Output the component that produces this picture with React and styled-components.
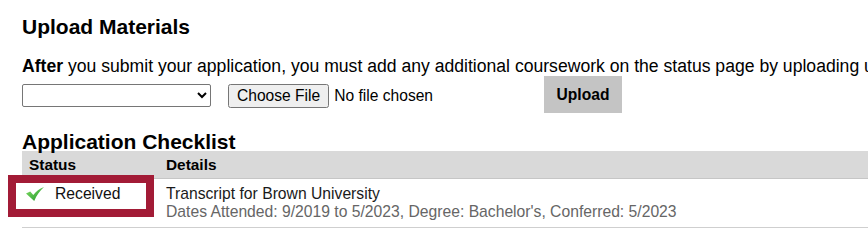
import styled, { createGlobalStyle } from "styled-components";

const GlobalStyle = createGlobalStyle`
  html, body {
    margin: 0;
    padding: 0;
    background: #fff;
    overflow: hidden;
  }
  body {
    font-family: "Liberation Sans", Arial, sans-serif;
    color: #000;
  }
`;

const Page = styled.div`
  padding: 15px 0 0 22px;
  width: 1100px;
`;

const Heading = styled.h3`
  margin: 0;
  font-size: 21px;
  font-weight: bold;
  line-height: ${({ $tight }) => ($tight ? "19px" : "24px")};
  margin-top: ${({ $top }) => $top || 0}px;
`;

const Intro = styled.p`
  margin: 17px 0 0;
  font-size: 17.6px;
  line-height: 20px;
  white-space: nowrap;
`;

const UploadRow = styled.div`
  display: flex;
  align-items: center;
  height: 37px;
`;

const TypeSelect = styled.select`
  width: 189px;
  height: 23px;
  margin: 1px 17px 0 0;
  font-family: "Liberation Sans", Arial, sans-serif;
  font-size: 15px;
  border: 1px solid #767676;
  border-radius: 2px;
  background: #fff;
`;

const FileInput = styled.input`
  width: 316px;
  font-family: "Liberation Sans", Arial, sans-serif;
  font-size: 15.6px;
  margin: 2px 0 0;
  padding: 0;

  &::file-selector-button {
    font-family: "Liberation Sans", Arial, sans-serif;
    font-size: 15.6px;
    height: 24px;
    padding: 0 7px;
    margin-right: 5px;
  }
`;

const UploadButton = styled.button`
  width: 78px;
  height: 37px;
  border: none;
  background: #c4c4c4;
  font-family: "Liberation Sans", Arial, sans-serif;
  font-size: 15.6px;
  font-weight: bold;
  color: #000;
  padding: 0;
`;

const Checklist = styled.div`
  width: 1000px;
`;

const HeaderRow = styled.div`
  display: grid;
  grid-template-columns: 137px 1fr;
  height: 27px;
  align-items: center;
  background: #d9d9d9;
  border-bottom: 1px solid #c6c6c6;
  font-size: 15.4px;
  font-weight: bold;
`;

const HeaderCell = styled.div`
  padding: 1px 0 0 7px;
`;

const Row = styled.div`
  position: relative;
  display: grid;
  grid-template-columns: 137px 1fr;
  height: 48px;
  border-bottom: 1px solid #cfcfcf;
  font-size: 15.7px;
  line-height: 17.5px;
`;

const StatusCell = styled.div`
  display: flex;
  align-items: flex-start;
  padding: 6px 0 0 4px;
  color: #111;
`;

const CheckIcon = styled.svg`
  width: 18px;
  height: 14px;
  margin: 2px 11px 0 0;
  flex: none;
`;

const DetailsCell = styled.div`
  padding: 6px 0 0 7px;
`;

const DetailTitle = styled.div`
  color: #1a1a1a;
`;

const DetailMeta = styled.div`
  color: #666;
`;

const Highlight = styled.div`
  position: absolute;
  left: -14px;
  top: -4px;
  width: 146px;
  height: 42px;
  box-sizing: border-box;
  border: 8px solid #a21b36;
  pointer-events: none;
`;

function Check() {
  return (
    <CheckIcon viewBox="0 0 18 14">
      <defs>
        <linearGradient id="chk" x1="0" y1="0" x2="1" y2="1">
          <stop offset="0" stopColor="#86e066" />
          <stop offset="1" stopColor="#1c9428" />
        </linearGradient>
      </defs>
      <path
        d="M0 6.6 L4.2 4.6 L7.3 8 C10 4.4 13.4 1.6 18 0 C13.8 3.6 10.8 8.2 8.2 14 Z"
        fill="url(#chk)"
      />
    </CheckIcon>
  );
}

export default function App() {
  return (
    <>
      <GlobalStyle />
      <Page>
        <Heading>Upload Materials</Heading>
        <Intro>
          <b>After</b> you submit your application, you must add any additional
          coursework on the status page by uploading unofficial transcripts.
        </Intro>
        <UploadRow>
          <TypeSelect defaultValue="">
            <option value=""></option>
          </TypeSelect>
          <FileInput type="file" />
          <UploadButton type="button">Upload</UploadButton>
        </UploadRow>
        <Heading $tight $top={19}>Application Checklist</Heading>
        <Checklist>
          <HeaderRow>
            <HeaderCell>Status</HeaderCell>
            <HeaderCell>Details</HeaderCell>
          </HeaderRow>
          <Row>
            <StatusCell>
              <Check />
              Received
            </StatusCell>
            <DetailsCell>
              <DetailTitle>Transcript for Brown University</DetailTitle>
              <DetailMeta>
                Dates Attended: 9/2019 to 5/2023, Degree: Bachelor's, Conferred: 5/2023
              </DetailMeta>
            </DetailsCell>
            <Highlight />
          </Row>
        </Checklist>
      </Page>
    </>
  );
}
